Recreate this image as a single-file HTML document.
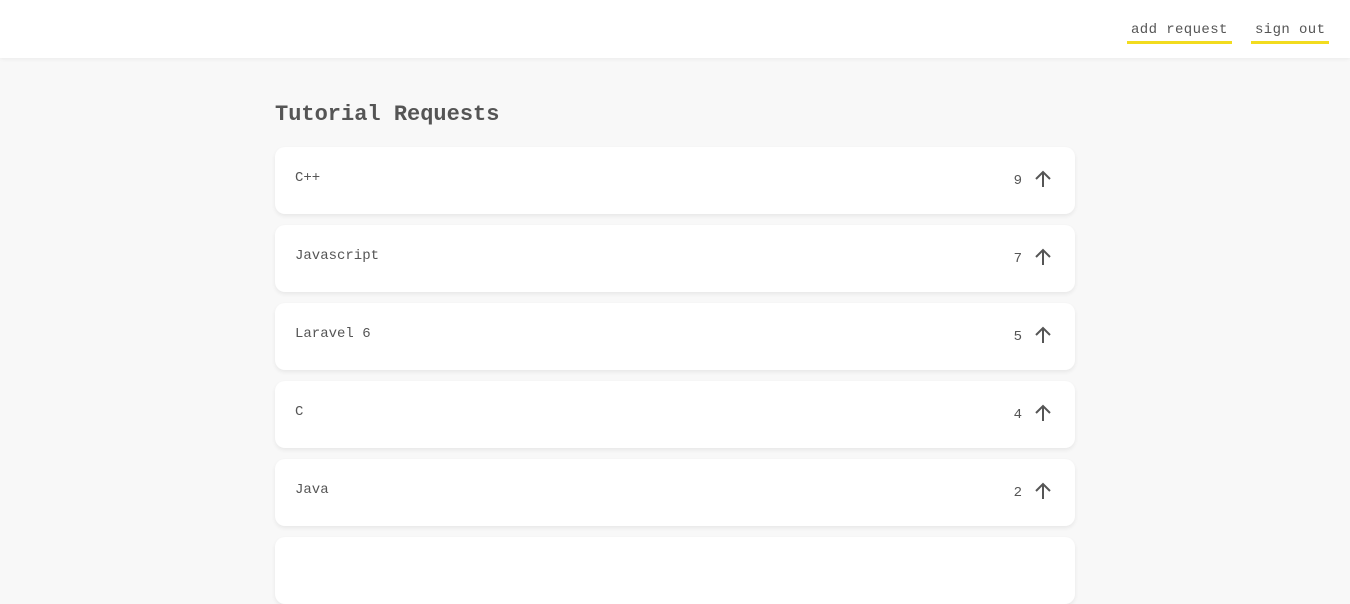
<!DOCTYPE html>
<html><head><style>
*{box-sizing:border-box;margin:0;padding:0}
html,body{width:1350px;height:540px;overflow:hidden}
body{background:#f8f8f8;font-family:"Liberation Mono",monospace;color:#555}
header{height:58px;background:#fff;box-shadow:0 1px 4px rgba(0,0,0,.06);position:relative}
header a{position:absolute;top:22px;font-size:14px;letter-spacing:0.4px;color:#555;text-decoration:none;padding:0 4px 2px;border-bottom:3px solid #f2dc1f;line-height:17px}
h1{position:absolute;left:275px;top:102px;font-size:22px;font-weight:bold;color:#555}
.card{position:absolute;left:275px;width:800px;height:67px;background:#fff;border-radius:10px;box-shadow:0 2px 4px rgba(0,0,0,.07)}
.card .t{position:absolute;left:20px;top:23px;font-size:14px}
.card .n{position:absolute;right:53px;top:26px;font-size:14px}
.card svg{position:absolute;right:23px;top:23px}
</style></head><body>
<header><a style="left:1127px">add request</a><a style="left:1251px">sign out</a></header>
<h1>Tutorial Requests</h1>
<div class="card" style="top:147px"><span class="t">C++</span><span class="n">9</span><svg width="18" height="18" viewBox="0 0 18 18"><path d="M9 17V2M2 9l7-7 7 7" fill="none" stroke="#555" stroke-width="2"/></svg></div>
<div class="card" style="top:225px"><span class="t">Javascript</span><span class="n">7</span><svg width="18" height="18" viewBox="0 0 18 18"><path d="M9 17V2M2 9l7-7 7 7" fill="none" stroke="#555" stroke-width="2"/></svg></div>
<div class="card" style="top:303px"><span class="t">Laravel 6</span><span class="n">5</span><svg width="18" height="18" viewBox="0 0 18 18"><path d="M9 17V2M2 9l7-7 7 7" fill="none" stroke="#555" stroke-width="2"/></svg></div>
<div class="card" style="top:381px"><span class="t">C</span><span class="n">4</span><svg width="18" height="18" viewBox="0 0 18 18"><path d="M9 17V2M2 9l7-7 7 7" fill="none" stroke="#555" stroke-width="2"/></svg></div>
<div class="card" style="top:459px"><span class="t">Java</span><span class="n">2</span><svg width="18" height="18" viewBox="0 0 18 18"><path d="M9 17V2M2 9l7-7 7 7" fill="none" stroke="#555" stroke-width="2"/></svg></div>
<div class="card" style="top:537px"></div>
</body></html>
